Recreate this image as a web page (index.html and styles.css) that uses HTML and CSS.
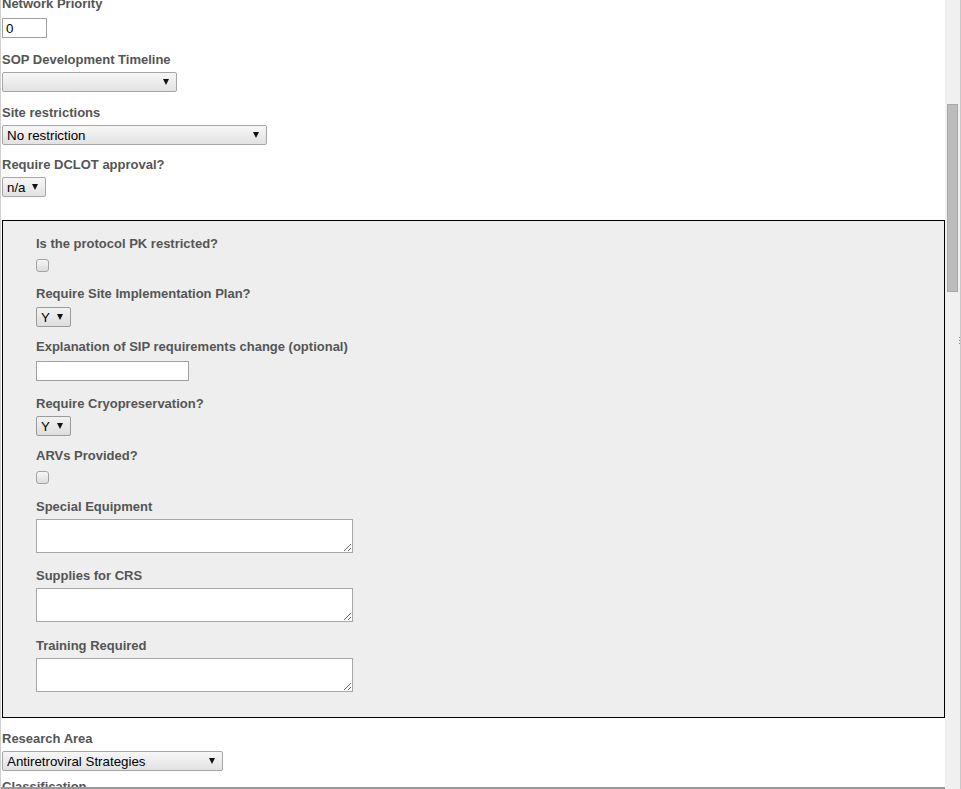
FILE: index.html
```html
<!DOCTYPE html>
<html>
<head>
<meta charset="utf-8">
<title>Protocol form</title>
<link rel="stylesheet" href="styles.css">
</head>
<body>
<div class="frame">
  <div class="viewport">
    <form class="form">
      <div class="field f-text mb14">
        <label>Network Priority</label>
        <input type="text" class="text short" value="0">
      </div>
      <div class="field f-sel mb13">
        <label>SOP Development Timeline</label>
        <span class="sel w175"><select><option></option></select></span>
      </div>
      <div class="field f-sel mb12">
        <label>Site restrictions</label>
        <span class="sel w265"><select><option>No restriction</option></select></span>
      </div>
      <div class="field f-sel mb23">
        <label>Require DCLOT approval?</label>
        <span class="sel w44"><select><option>n/a</option></select></span>
      </div>

      <div class="box">
        <div class="field f-check mb14">
          <label>Is the protocol PK restricted?</label>
          <input type="checkbox" class="check">
        </div>
        <div class="field f-sel6 mb12">
          <label>Require Site Implementation Plan?</label>
          <span class="sel w35"><select><option>Y</option></select></span>
        </div>
        <div class="field f-text mb15">
          <label>Explanation of SIP requirements change (optional)</label>
          <input type="text" class="text mid">
        </div>
        <div class="field f-sel mb12">
          <label>Require Cryopreservation?</label>
          <span class="sel w35"><select><option>Y</option></select></span>
        </div>
        <div class="field f-check mb15">
          <label>ARVs Provided?</label>
          <input type="checkbox" class="check">
        </div>
        <div class="field f-sel mb15">
          <label>Special Equipment</label>
          <textarea class="area"></textarea>
        </div>
        <div class="field f-sel mb16">
          <label>Supplies for CRS</label>
          <textarea class="area"></textarea>
        </div>
        <div class="field f-sel">
          <label>Training Required</label>
          <textarea class="area"></textarea>
        </div>
      </div>

      <div class="field f-sel after-box mb8">
        <label>Research Area</label>
        <span class="sel w221"><select><option>Antiretroviral Strategies</option></select></span>
      </div>
      <div class="field">
        <label>Classification</label>
      </div>
    </form>
  </div>
  <div class="scrollbar">
    <div class="thumb"></div>
    <div class="grip"></div>
  </div>
</div>
</body>
</html>
```

FILE: styles.css
```css
html, body {
  margin: 0;
  padding: 0;
  background: #fff;
}

body {
  font-family: "Liberation Sans", Arial, sans-serif;
  font-size: 13px;
  overflow: hidden;
}

.frame {
  display: flex;
  height: 789px;
  border-left: 1px solid #d0d0d0;
  border-right: 1px solid #c8c8c8;
  overflow: hidden;
}

.viewport {
  flex: 1;
  height: 789px;
  box-sizing: border-box;
  padding-left: 1px;
  overflow: hidden;
  border-bottom: 2px solid #9a9a9a;
}

.form {
  margin: -4px 0 0 0;
}

.field label {
  display: block;
  font-weight: bold;
  color: #555;
  line-height: 15px;
  margin-bottom: 5px;
}
.f-sel label { margin-bottom: 5px; }
.f-sel6 label { margin-bottom: 6px; }
.f-text label { margin-bottom: 7px; }
.f-check label { margin-bottom: 8px; }

.mb8 { margin-bottom: 8px; }
.mb11 { margin-bottom: 11px; }
.mb12 { margin-bottom: 12px; }
.mb13 { margin-bottom: 13px; }
.mb14 { margin-bottom: 14px; }
.mb15 { margin-bottom: 15px; }
.mb16 { margin-bottom: 16px; }
.mb23 { margin-bottom: 23px; }

.after-box { margin-top: 13px; }

/* selects */
.sel {
  position: relative;
  display: block;
  height: 20px;
}
.sel select {
  -webkit-appearance: none;
  appearance: none;
  display: block;
  box-sizing: border-box;
  width: 100%;
  height: 20px;
  margin: 0;
  padding: 2px 0 0 4px;
  border: 1px solid #a6a6a6;
  border-radius: 2px;
  background: linear-gradient(#f7f7f7, #e2e2e2);
  font-family: "Liberation Sans", Arial, sans-serif;
  font-size: 13.333px;
  color: #000;
  line-height: 16px;
}
.sel::after {
  content: "";
  position: absolute;
  top: 7px;
  right: 8px;
  width: 0;
  height: 0;
  border-left: 3px solid transparent;
  border-right: 3px solid transparent;
  border-top: 6px solid #111;
  pointer-events: none;
}
.w175 { width: 175px; }
.w265 { width: 265px; }
.w44 { width: 44px; }
.w35 { width: 35px; }
.w221 { width: 221px; }

.box .sel select {
  background: linear-gradient(#f2f2f2, #dedede);
  border-color: #9a9a9a;
}

/* text inputs */
.text {
  display: block;
  box-sizing: border-box;
  height: 20px;
  margin: 0;
  padding: 0 0 0 3px;
  border: 1px solid #a0a0a0;
  background: #fff;
  font-family: "Liberation Sans", Arial, sans-serif;
  font-size: 13.333px;
  color: #000;
  outline: none;
}
.short { width: 45px; }
.mid { width: 153px; }

/* checkbox */
.check {
  -webkit-appearance: none;
  appearance: none;
  display: block;
  box-sizing: border-box;
  width: 13px;
  height: 13px;
  margin: 0;
  border: 1px solid #a3a3a3;
  border-radius: 3px;
  background: linear-gradient(#f6f6f6, #dcdcdc);
}

/* textarea */
.area {
  display: block;
  box-sizing: border-box;
  width: 317px;
  height: 34px;
  margin: 0;
  padding: 2px;
  border: 1px solid #a6a6a6;
  background: #fff;
  font-family: "Liberation Sans", Arial, sans-serif;
  font-size: 13px;
  resize: both;
}

/* grey box */
.box {
  width: 943px;
  box-sizing: border-box;
  border: 1px solid #000;
  background: #eeeeee;
  padding: 15px 0 25px 33px;
}

/* fake page scrollbar */
.scrollbar {
  width: 15px;
  flex: none;
  background: #f0f0f0;
  position: relative;
}
.thumb {
  margin: 104px 0 0 2px;
  width: 11px;
  height: 188px;
  box-sizing: border-box;
  background: #bcbcbc;
  border: 1px solid #a8a8a8;
}
.grip {
  position: absolute;
  right: 0;
  top: 337px;
  width: 1px;
  height: 7px;
  background: repeating-linear-gradient(#888 0 1px, transparent 1px 3px);
}
```
